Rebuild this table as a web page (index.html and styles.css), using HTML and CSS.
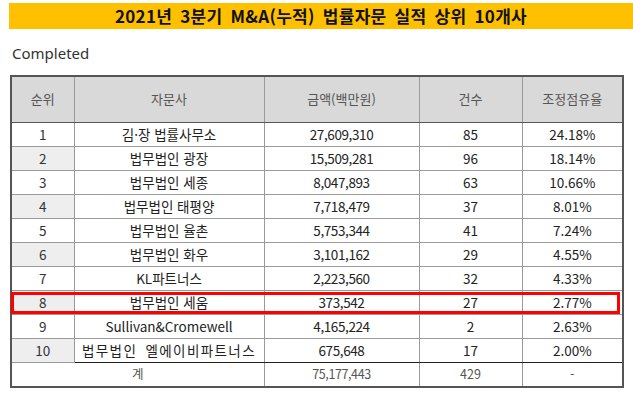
FILE: index.html
```html
<!DOCTYPE html>
<html lang="ko">
<head>
<meta charset="utf-8">
<link rel="stylesheet" href="styles.css">
</head>
<body>
<div class="page">
  <div class="title">2021년 3분기 M&amp;A(누적) 법률자문 실적 상위 10개사</div>
  <div class="subtitle">Completed</div>
  <div class="table-wrap">
    <table class="rank-table">
      <colgroup>
        <col class="c1"><col class="c2"><col class="c3"><col class="c4"><col class="c5">
      </colgroup>
      <thead>
        <tr class="head"><th>순위</th><th>자문사</th><th>금액(백만원)</th><th>건수</th><th>조정점유율</th></tr>
      </thead>
      <tbody>
        <tr><td class="rank">1</td><td>김·장 법률사무소</td><td class="num">27,609,310</td><td>85</td><td>24.18%</td></tr>
        <tr class="even"><td class="rank">2</td><td>법무법인 광장</td><td class="num">15,509,281</td><td>96</td><td>18.14%</td></tr>
        <tr><td class="rank">3</td><td>법무법인 세종</td><td class="num">8,047,893</td><td>63</td><td>10.66%</td></tr>
        <tr class="even"><td class="rank">4</td><td>법무법인 태평양</td><td class="num">7,718,479</td><td>37</td><td>8.01%</td></tr>
        <tr><td class="rank">5</td><td>법무법인 율촌</td><td class="num">5,753,344</td><td>41</td><td>7.24%</td></tr>
        <tr class="even"><td class="rank">6</td><td>법무법인 화우</td><td class="num">3,101,162</td><td>29</td><td>4.55%</td></tr>
        <tr><td class="rank">7</td><td>KL파트너스</td><td class="num">2,223,560</td><td>32</td><td>4.33%</td></tr>
        <tr class="even"><td class="rank">8</td><td>법무법인 세움</td><td class="num">373,542</td><td>27</td><td>2.77%</td></tr>
        <tr><td class="rank">9</td><td>Sullivan&amp;Cromewell</td><td class="num">4,165,224</td><td>2</td><td>2.63%</td></tr>
        <tr class="even last"><td class="rank">10</td><td class="wide">법무법인 엘에이비파트너스</td><td class="num">675,648</td><td>17</td><td>2.00%</td></tr>
        <tr class="total"><td colspan="2">계</td><td class="num">75,177,443</td><td>429</td><td>-</td></tr>
      </tbody>
    </table>
    <div class="highlight"></div>
  </div>
</div>
</body>
</html>
```

FILE: styles.css
```css
html, body {
  margin: 0;
  padding: 0;
  background: #ffffff;
}

body {
  font-family: "Noto Sans CJK KR", "Noto Sans", sans-serif;
  color: #222;
}

.page {
  width: 633px;
  height: 401px;
  padding-top: 3px;
  box-sizing: border-box;
}

.title {
  margin-left: 9px;
  height: 26px;
  line-height: 26px;
  background: #ffc000;
  color: #111;
  font-weight: bold;
  font-size: 17px;
  text-align: center;
  letter-spacing: 0.3px;
  word-spacing: 3px;
}

.subtitle {
  margin: 14px 0 0 12px;
  height: 20px;
  line-height: 20px;
  font-family: "Noto Sans", "Open Sans", sans-serif;
  font-size: 15px;
  color: #333;
}

.table-wrap {
  position: relative;
  margin: 12px 0 0 10px;
  width: 612px;
}

.rank-table {
  width: 612px;
  border-collapse: collapse;
  table-layout: fixed;
  border: 2px solid #555;
}

.c1 { width: 63px; }
.c2 { width: 190px; }
.c3 { width: 155px; }
.c4 { width: 103px; }
.c5 { width: 101px; }

.rank-table th,
.rank-table td {
  border: 1px solid #9a9a9a;
  padding: 0;
  text-align: center;
  vertical-align: middle;
  font-size: 13.5px;
  line-height: 18px;
  white-space: nowrap;
}

.rank-table th {
  background: #d9d9d9;
  color: #555;
  font-weight: normal;
  font-size: 13px;
  border-bottom: 1px solid #555;
}

.head { height: 46px; }

.rank-table tbody tr { height: 24px; }

.rank-table td {
  color: #222;
}

.rank-table td.rank {
  color: #333;
}

.rank-table td.num {
  letter-spacing: -0.4px;
}

.rank-table td.wide {
  letter-spacing: 1.4px;
  word-spacing: 3px;
}

.even .rank {
  background: #eeeeee;
}

.rank-table .last td {
  border-bottom: 1px solid #222;
}

.rank-table .last td.rank {
  border-bottom: 1px solid #9a9a9a;
}

.rank-table .total {
  height: 25px;
}

.rank-table .total td {
  color: #555;
  font-size: 12.5px;
}

.highlight {
  position: absolute;
  left: 1px;
  top: 217px;
  width: 603px;
  height: 16px;
  border: 3px solid #ff0000;
  pointer-events: none;
}
```
